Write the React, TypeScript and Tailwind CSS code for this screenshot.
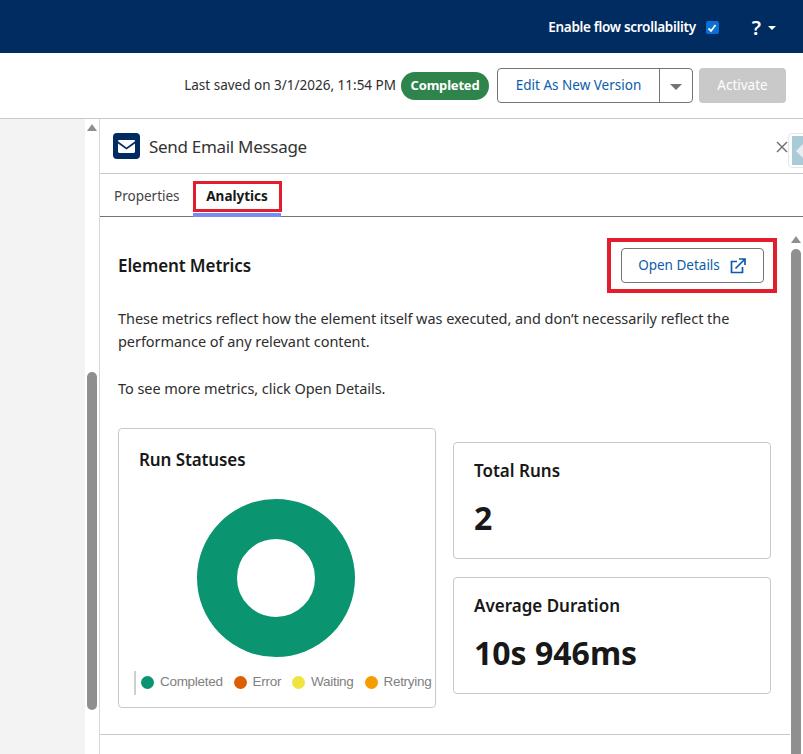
import React from "react";

function Legend({ color, label }: { color: string; label: string }) {
  return (
    <div className="flex items-center gap-[6px] shrink-0">
      <span className={`w-[13px] h-[13px] rounded-full ${color}`} />
      <span>{label}</span>
    </div>
  );
}

export default function App() {
  return (
    <div className="w-[803px] h-[754px] overflow-hidden flex flex-col bg-white text-[#181818] font-['Noto_Sans',sans-serif]">
      <header className="h-[53px] shrink-0 bg-[#012c61] flex items-center justify-end text-white pt-[2px]">
        <span className="text-[13.5px] font-semibold tracking-[-0.3px]">Enable flow scrollability</span>
        <span className="ml-[10px] w-[13px] h-[13px] rounded-[2px] bg-[#0b6fd3] flex items-center justify-center">
          <svg width="10" height="10" viewBox="0 0 10 10" fill="none" stroke="white" strokeWidth="1.8">
            <path d="M1.5 5.5 L4 8 L8.5 2" />
          </svg>
        </span>
        <span className="ml-[33px] text-[20px] font-semibold leading-none">?</span>
        <span className="ml-[7px] mr-[27px] w-0 h-0 border-x-[4px] border-x-transparent border-t-[4px] border-t-white" />
      </header>

      <div className="h-[66px] shrink-0 border-b border-[#c9c9c9] flex items-center justify-end">
        <span className="text-[13.5px] text-[#2e2e2e]">Last saved on 3/1/2026, 11:54 PM</span>
        <span className="ml-[5px] h-[28px] w-[88px] rounded-full bg-[#2e844a] text-white text-[13px] font-bold tracking-[-0.2px] flex items-center justify-center">Completed</span>
        <div className="ml-[8px] h-[35px] w-[196px] border border-[#747474] rounded-[4px] flex text-[#0b5cab] text-[13.5px]">
          <span className="w-[162px] border-r border-[#747474] flex items-center justify-center">Edit As New Version</span>
          <span className="flex-1 flex items-center justify-center">
            <span className="mt-[3px] w-0 h-0 border-x-[6px] border-x-transparent border-t-[6px] border-t-[#747474]" />
          </span>
        </div>
        <span className="ml-[6px] mr-[17px] h-[35px] w-[87px] rounded-[4px] bg-[#c9c9c9] text-white text-[13.5px] flex items-center justify-center">Activate</span>
      </div>

      <div className="flex-1 flex min-h-0">
        <div className="w-[85px] shrink-0 bg-[#f3f3f3]" />
        <div className="w-[14px] shrink-0 bg-white flex flex-col items-center pt-[5px]">
          <span className="w-0 h-0 border-x-[5px] border-x-transparent border-b-[7px] border-b-[#8f8f8f]" />
          <span className="mt-[241px] w-[10px] h-[338px] rounded-full bg-[#8f8f8f]" />
        </div>

        <div className="flex-1 min-w-0 border-l border-[#d8d8d8] flex flex-col relative">
          <div className="h-[55px] shrink-0 border-b border-[#c9c9c9] flex items-center pl-[13px]">
            <span className="w-[27px] h-[26px] rounded-[4px] bg-[#012c61] flex items-center justify-center">
              <svg width="17" height="13" viewBox="0 0 17 13">
                <path d="M0 1.2 C0 .5 .5 0 1.2 0 H15.8 C16.5 0 17 .5 17 1.2 L8.5 7.5 Z" fill="white" />
                <path d="M0 3.4 L8.5 9.6 L17 3.4 V11.6 C17 12.4 16.5 13 15.8 13 H1.2 C.5 13 0 12.4 0 11.6 Z" fill="white" />
              </svg>
            </span>
            <span className="ml-[9px] mt-[1px] text-[17px] tracking-[-0.3px] text-[#333]">Send Email Message</span>
            <svg className="absolute left-[676px] top-[22px]" width="12" height="12" viewBox="0 0 12 12" stroke="#6b6b6b" strokeWidth="1.4">
              <path d="M1 1 L11 11 M11 1 L1 11" />
            </svg>
            <div className="absolute left-[688px] top-[14px] w-[20px] h-[35px] bg-white rounded-l-[5px] border border-r-0 border-[#e5e5e5] pl-[3px] pt-[2px]">
              <div className="w-full h-[29px] bg-[#a9cbd8] flex items-center pl-[4px]">
                <span className="w-0 h-0 border-y-[9px] border-y-transparent border-r-[9px] border-r-[#e6eef2]" />
              </div>
            </div>
          </div>

          <div className="h-[43px] shrink-0 border-b border-[#747474] flex items-start pl-[14px]">
            <span className="mt-[12px] text-[13.5px] text-[#444]">Properties</span>
            <div className="ml-[13px] mt-[7px] flex flex-col">
              <span className="w-[89px] h-[31px] border-[3px] border-[#e11d2e] flex items-center justify-center text-[13.5px] font-bold text-[#181818]">Analytics</span>
              <span className="mt-[1px] h-[4px] w-[88px] bg-[#7a8cf0]" />
            </div>
          </div>

          <div className="flex-1 min-h-0 flex">
            <div className="flex-1 min-w-0 pl-[18px] pr-[19px] pt-[21px] flex flex-col">
              <div className="flex items-center justify-between h-[55px]">
                <span className="text-[17px] font-semibold tracking-[-0.1px] text-[#181818]">Element Metrics</span>
                <div className="-mr-[6px] w-[170px] h-[55px] border-[4px] border-[#e11d2e] flex items-center justify-center">
                  <span className="w-[143px] h-[35px] border border-[#747474] rounded-[4px] flex items-center justify-center gap-[10px] text-[#0b5cab] text-[13.5px]">
                    Open Details
                    <svg width="16" height="16" viewBox="0 0 16 16" fill="none" stroke="#0b5cab" strokeWidth="1.7">
                      <path d="M7 3.5 H1.5 V14.5 H12.5 V9" />
                      <path d="M5.5 10.5 L14.5 1.5 M9 1 H15 V7" />
                    </svg>
                  </span>
                </div>
              </div>

              <div className="mt-[14px] text-[14.5px] leading-[23px] tracking-[-0.05px] text-[#2e2e2e]">
                <p>These metrics reflect how the element itself was executed, and don’t necessarily reflect the</p>
                <p>performance of any relevant content.</p>
                <p className="mt-[24px]">To see more metrics, click Open Details.</p>
              </div>

              <div className="mt-[28px] flex gap-[17px] items-center">
                <div className="w-[318px] h-[280px] shrink-0 border border-[#c9c9c9] rounded-[4px] flex flex-col">
                  <span className="ml-[20px] mt-[18px] text-[17px] font-semibold tracking-[-0.1px] text-[#181818]">Run Statuses</span>
                  <svg className="ml-[77px] mt-[25px]" width="160" height="160" viewBox="0 0 160 160">
                    <circle cx="80" cy="80" r="59" fill="none" stroke="#0a9470" strokeWidth="40" />
                  </svg>
                  <div className="mt-[13px] ml-[15px] w-[299px] overflow-hidden border-l-2 border-[#cfcfcf] pl-[5px] h-[24px] flex items-center gap-[11px] text-[13.5px] tracking-[-0.3px] text-[#7f7f7f] font-['Liberation_Sans',sans-serif]">
                    <Legend color="bg-[#0a9471]" label="Completed" />
                    <Legend color="bg-[#dd5f05]" label="Error" />
                    <Legend color="bg-[#f1e340]" label="Waiting" />
                    <Legend color="bg-[#f59c00]" label="Retrying" />
                  </div>
                </div>

                <div className="flex-1 flex flex-col gap-[18px]">
                  <div className="h-[117px] border border-[#c9c9c9] rounded-[4px] pl-[20px] pt-[15px]">
                    <div className="text-[17px] font-semibold text-[#181818]">Total Runs</div>
                    <div className="mt-[12px] text-[32px] leading-[44px] font-bold text-[#181818]">2</div>
                  </div>
                  <div className="h-[117px] border border-[#c9c9c9] rounded-[4px] pl-[20px] pt-[15px]">
                    <div className="text-[17px] font-semibold text-[#181818]">Average Duration</div>
                    <div className="mt-[12px] text-[32px] leading-[44px] font-bold text-[#181818]">10s 946ms</div>
                  </div>
                </div>
              </div>

              <div className="mt-[26px] border-t border-[#c9c9c9] -ml-[18px] -mr-[19px]" />
            </div>

            <div className="w-[12px] shrink-0 mr-[1px] flex flex-col items-center pt-[19px]">
              <span className="w-0 h-0 border-x-[5px] border-x-transparent border-b-[7px] border-b-[#8f8f8f]" />
              <span className="mt-[6px] w-[10px] flex-1 rounded-t-full bg-[#8f8f8f]" />
            </div>
          </div>
        </div>
      </div>
    </div>
  );
}
